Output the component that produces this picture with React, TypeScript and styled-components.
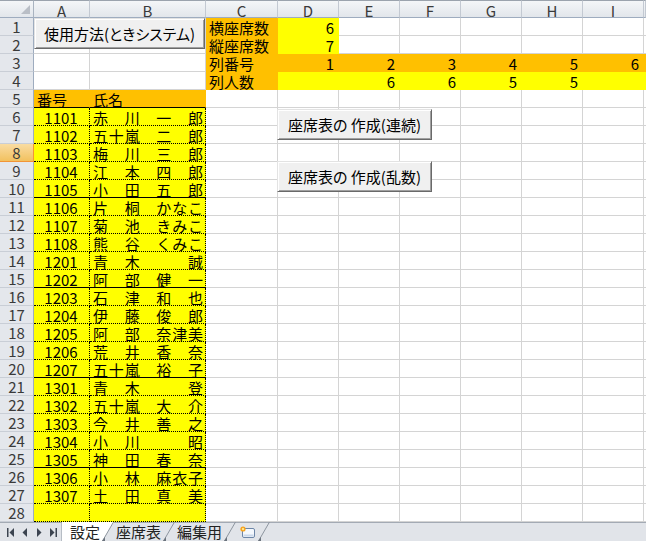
import React from 'react';
import styled, { createGlobalStyle, css } from 'styled-components';

const GlobalStyle = createGlobalStyle`
  html, body {
    margin: 0;
    padding: 0;
    background: #fff;
    overflow: hidden;
  }
  body {
    font-family: "Noto Sans CJK JP", "Liberation Sans", sans-serif;
  }
`;

const ORANGE = '#ffc000';
const YELLOW = '#ffff00';
const GRIDLINE = '#d4d4d4';

const COLS = ['A', 'B', 'C', 'D', 'E', 'F', 'G', 'H', 'I', ''];
const WIDTHS = [56, 116, 72, 61, 61, 61, 61, 61, 61, 2];
const ROWS = 28;

const NAMES: [string, string][] = [
  ['1101', '赤　川　一　郎'],
  ['1102', '五十嵐　二　郎'],
  ['1103', '梅　川　三　郎'],
  ['1104', '江　本　四　郎'],
  ['1105', '小　田　五　郎'],
  ['1106', '片　桐　かなこ'],
  ['1107', '菊　池　きみこ'],
  ['1108', '熊　谷　くみこ'],
  ['1201', '青　木　　　誠'],
  ['1202', '阿　部　健　一'],
  ['1203', '石　津　和　也'],
  ['1204', '伊　藤　俊　郎'],
  ['1205', '阿　部　奈津美'],
  ['1206', '荒　井　香　奈'],
  ['1207', '五十嵐　裕　子'],
  ['1301', '青　木　　　登'],
  ['1302', '五十嵐　大　介'],
  ['1303', '今　井　善　之'],
  ['1304', '小　川　　　昭'],
  ['1305', '神　田　春　奈'],
  ['1306', '小　林　麻衣子'],
  ['1307', '土　田　真　美'],
];

type Fill = 'orange' | 'yellow' | undefined;
type Line = 'grid' | 'dotted' | 'solid' | 'none';
type Align = 'left' | 'right' | 'center' | 'spread';

interface CellSpec {
  text?: string;
  fill?: Fill;
  align?: Align;
  bottom?: Line;
  right?: Line;
}

const Window = styled.div`
  position: relative;
  width: 646px;
  height: 541px;
  overflow: hidden;
  display: flex;
  flex-direction: column;
`;

const Sheet = styled.div`
  display: grid;
  grid-template-columns: 34px ${WIDTHS.map((w) => `${w}px`).join(' ')};
  grid-auto-rows: 18px;
  height: 522px;
  overflow: hidden;
`;

const headBg = css`
  background: linear-gradient(#f4f6f8, #e2e6eb);
  color: #3a3a3a;
  font-size: 15px;
  box-sizing: border-box;
`;

const Corner = styled.div`
  ${headBg};
  position: relative;
  border-top: 1px solid #9ba3ad;
  border-right: 1px solid #a9b3c0;
  border-bottom: 1px solid #9eacbf;

  &::after {
    content: '';
    position: absolute;
    right: 3px;
    bottom: 3px;
    border-style: solid;
    border-width: 0 0 9px 9px;
    border-color: transparent transparent #b9bec6 transparent;
  }
`;

const ColHead = styled.div`
  ${headBg};
  border-top: 1px solid #9ba3ad;
  border-right: 1px solid #c3c9d2;
  border-bottom: 1px solid #9eacbf;
  text-align: center;
  line-height: 20px;
`;

const RowHead = styled.div<{ $active?: boolean }>`
  ${headBg};
  background: ${(p) => (p.$active ? 'linear-gradient(#f9dca2, #f2c15f)' : '#e4e7ec')};
  border-right: 1px solid ${(p) => (p.$active ? '#f29536' : '#9eacbf')};
  border-bottom: 1px solid ${(p) => (p.$active ? '#f29536' : '#c9ced6')};
  text-align: center;
  line-height: 18px;
`;

const lineCss = (l: Line | undefined, fallback: string) => {
  switch (l) {
    case 'dotted':
      return '1px dotted #000';
    case 'solid':
      return '1px solid #000';
    case 'grid':
      return `1px solid ${GRIDLINE}`;
    default:
      return fallback;
  }
};

const Cell = styled.div<{ $fill?: Fill; $align?: Align; $bottom?: Line; $right?: Line }>`
  box-sizing: border-box;
  background: ${(p) => (p.$fill === 'orange' ? ORANGE : p.$fill === 'yellow' ? YELLOW : '#fff')};
  border-right: ${(p) => lineCss(p.$right, p.$fill ? '1px solid transparent' : `1px solid ${GRIDLINE}`)};
  border-bottom: ${(p) => lineCss(p.$bottom, p.$fill ? '1px solid transparent' : `1px solid ${GRIDLINE}`)};
  font-size: 15px;
  line-height: 19px;
  color: #000;
  white-space: pre;
  padding: 0 4px 0 3px;
  text-align: ${(p) => (p.$align === 'spread' ? 'left' : p.$align || 'left')};
  ${(p) =>
    p.$align === 'spread' &&
    css`
      display: flex;
      justify-content: space-between;
      padding: 0 2px 0 3px;
    `}
`;

const Ch = styled.span`
  display: inline-block;
  width: 15px;
  text-align: center;
`;

const FormButton = styled.button<{ $top: number; $left: number; $width: number }>`
  position: absolute;
  top: ${(p) => p.$top}px;
  left: ${(p) => p.$left}px;
  width: ${(p) => p.$width}px;
  height: 31px;
  margin: 0;
  padding: 0;
  box-sizing: border-box;
  background: #f0f0f0;
  border: 1px solid;
  border-color: #e3e3e3 #696969 #696969 #e3e3e3;
  box-shadow: inset 1px 1px 0 #ffffff, inset -1px -1px 0 #a0a0a0;
  font-family: "Noto Sans CJK JP", sans-serif;
  font-size: 15px;
  font-feature-settings: "palt";
  color: #000;
  display: flex;
  align-items: center;
  justify-content: center;
  line-height: 1;
`;

const TabBar = styled.div`
  height: 19px;
  display: flex;
  align-items: stretch;
  background: #e1e4e9;
  border-top: 1px solid #a3aab4;
  box-sizing: border-box;
`;

const Nav = styled.div`
  display: flex;
  align-items: center;
  width: 62px;
  padding-left: 4px;
  box-sizing: border-box;
  border-right: 1px solid #b7bdc5;
`;

const NavBtn = styled.span`
  width: 14px;
  display: flex;
  justify-content: center;
`;

const SheetTab = styled.div<{ $active?: boolean }>`
  display: flex;
  align-items: center;
  height: 19px;
  margin-top: -1px;
  padding: 0 2px 0 ${(p) => (p.$active ? 8 : 2)}px;
  background: ${(p) => (p.$active ? '#fff' : 'transparent')};
  font-size: 15px;
  color: #222;
`;

const SlantBox = styled.svg`
  display: block;
  margin-top: -1px;
  flex: none;
`;

const Slant = ({ active }: { active?: boolean }) => (
  <SlantBox width="12" height="19" viewBox="0 0 12 19">
    {active && <polygon points="0,0 12,0 0,19" fill="#fff" />}
    <line x1="0.5" y1="19" x2="11.5" y2="0" stroke="#8d959f" strokeWidth="1" />
    <polygon points="0,19 3,19 3,15" fill="#6b737d" />
  </SlantBox>
);

const NewSheetIcon = () => (
  <svg width="18" height="14" viewBox="0 0 18 14">
    <rect x="4.5" y="3.5" width="12" height="9" rx="1.5" fill="#f4f8fd" stroke="#6d86a8" />
    <rect x="5.5" y="9.5" width="10" height="2" fill="#c9d7ea" />
    <circle cx="5" cy="4" r="2.6" fill="#f7a11a" />
    <circle cx="5" cy="4" r="1.2" fill="#ffe58a" />
  </svg>
);

const Arrow = ({ dir, bar }: { dir: 'l' | 'r'; bar?: boolean }) => (
  <svg width="8" height="9" viewBox="0 0 8 9">
    {dir === 'l' ? (
      <>
        {bar && <rect x="0" y="0" width="1.5" height="9" fill="#3c4450" />}
        <polygon points={bar ? '7,0 7,9 2.5,4.5' : '6,0 6,9 1.5,4.5'} fill="#3c4450" />
      </>
    ) : (
      <>
        <polygon points={bar ? '1,0 1,9 5.5,4.5' : '2,0 2,9 6.5,4.5'} fill="#3c4450" />
        {bar && <rect x="6.5" y="0" width="1.5" height="9" fill="#3c4450" />}
      </>
    )}
  </svg>
);

function cellAt(r: number, c: number): CellSpec {
  // top-right block (C..J)
  if (r === 1 && c === 2) return { text: '横座席数', fill: 'orange' };
  if (r === 1 && c === 3) return { text: '6', fill: 'yellow', align: 'right' };
  if (r === 2 && c === 2) return { text: '縦座席数', fill: 'orange' };
  if (r === 2 && c === 3) return { text: '7', fill: 'yellow', align: 'right' };
  if (r === 3 && c >= 2) {
    return { text: c === 2 ? '列番号' : c <= 8 ? String(c - 2) : '', fill: 'orange', align: c === 2 ? 'left' : 'right' };
  }
  if (r === 4 && c >= 2) {
    const counts: Record<number, string> = { 4: '6', 5: '6', 6: '5', 7: '5' };
    if (c === 2) return { text: '列人数', fill: 'orange' };
    return { text: counts[c] || '', fill: 'yellow', align: 'right' };
  }
  // name list (A..B)
  if (r === 5 && c <= 1) return { text: c === 0 ? '番号' : '氏名', fill: 'orange', bottom: 'solid' };
  if (r >= 6 && c <= 1) {
    const bottom: Line = [10, 15, 20, 25].includes(r) ? 'solid' : 'dotted';
    const item = NAMES[r - 6];
    if (!item) return { fill: 'yellow', bottom, right: 'dotted' };
    return c === 0
      ? { text: item[0], fill: 'yellow', align: 'center', bottom, right: 'dotted' }
      : { text: item[1], fill: 'yellow', align: 'spread', bottom, right: 'dotted' };
  }
  return {};
}

export default function App() {
  const rows = Array.from({ length: ROWS }, (_, i) => i + 1);
  return (
    <Window>
      <GlobalStyle />
      <Sheet>
        <Corner />
        {COLS.map((c, i) => (
          <ColHead key={`h${i}`}>{c}</ColHead>
        ))}
        {rows.map((r) => (
          <React.Fragment key={r}>
            <RowHead $active={r === 8}>{r}</RowHead>
            {COLS.map((_, c) => {
              const spec = cellAt(r, c);
              return (
                <Cell
                  key={c}
                  $fill={spec.fill}
                  $align={spec.align}
                  $bottom={spec.bottom}
                  $right={spec.right}
                >
                  {spec.align === 'spread'
                    ? Array.from(spec.text || '').map((ch, k) => <Ch key={k}>{ch}</Ch>)
                    : spec.text}
                </Cell>
              );
            })}
          </React.Fragment>
        ))}
      </Sheet>

      <FormButton $top={18} $left={34} $width={171}>使用方法(ときシステム)</FormButton>
      <FormButton $top={109} $left={277} $width={155}>座席表の 作成(連続)</FormButton>
      <FormButton $top={161} $left={277} $width={155}>座席表の 作成(乱数)</FormButton>

      <TabBar>
        <Nav>
          <NavBtn><Arrow dir="l" bar /></NavBtn>
          <NavBtn><Arrow dir="l" /></NavBtn>
          <NavBtn><Arrow dir="r" /></NavBtn>
          <NavBtn><Arrow dir="r" bar /></NavBtn>
        </Nav>
        <SheetTab $active>設定</SheetTab>
        <Slant active />
        <SheetTab>座席表</SheetTab>
        <Slant />
        <SheetTab>編集用</SheetTab>
        <Slant />
        <SheetTab>
          <NewSheetIcon />
        </SheetTab>
        <Slant />
      </TabBar>
    </Window>
  );
}
